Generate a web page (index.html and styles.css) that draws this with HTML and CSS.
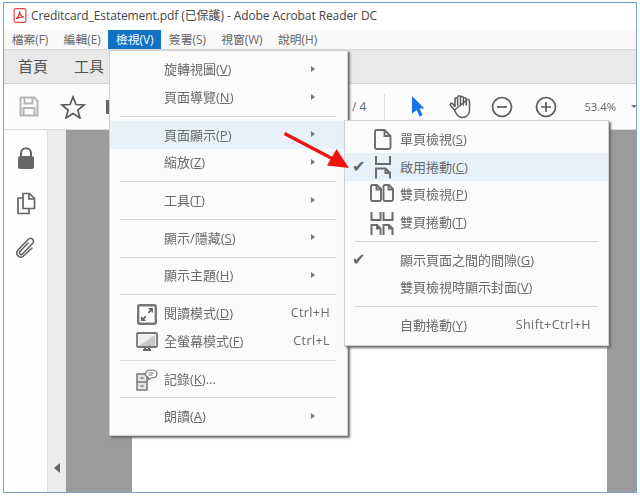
FILE: index.html
```html
<!DOCTYPE html>
<html lang="zh-Hant">
<head>
    <meta charset="UTF-8">
    <title>Creditcard_Estatement.pdf</title>
    <link rel="stylesheet" href="styles.css">
</head>
<body>
    <div class="window">
        <div class="titlebar">
            <svg class="pdf-icon" width="14" height="15" viewBox="0 0 14 16"><rect x="0.75" y="0.75" width="12.5" height="14.5" rx="1.5" fill="#fff" stroke="#e8474a" stroke-width="1.3"/><path d="M3 11.5C5 10 6.5 7 6.6 3.6C6.8 7 8.4 9 11 9.6C8.4 9.4 5.500 10 3 11.500Z" fill="none" stroke="#d9262a" stroke-width="1.2"/></svg>
            <span>Creditcard_Estatement.pdf (已保護) - Adobe Acrobat Reader DC</span>
        </div>
        <div class="menubar">
            <span class="menubar-item">檔案(F)</span>
            <span class="menubar-item">編輯(E)</span>
            <span class="menubar-item active">檢視(V)</span>
            <span class="menubar-item">簽署(S)</span>
            <span class="menubar-item">視窗(W)</span>
            <span class="menubar-item">說明(H)</span>
        </div>
        <div class="tabs">
            <span class="tab">首頁</span>
            <span class="tab">工具</span>
        </div>
        <div class="toolbar">
            <svg class="tool-save" width="20" height="21" viewBox="0 0 20 21" fill="none" stroke="#b4b4b4" stroke-width="2"><path d="M2 1.500H15L18.500 5V19.500H1.500V2Z"/><path d="M5.500 2V7.500H13.500V2M4.500 19V12H15.500V19"/></svg>
            <svg class="tool-star" width="26" height="24" viewBox="0 0 26 24" fill="none" stroke="#5a5a5a" stroke-width="1.700"><path d="M13 2L16 9.500L24 10L17.800 15L20 23L13 18.500L6 23L8.200 15L2 10L10 9.500Z"/></svg>
            <span class="tool-stub"></span>
            <span class="page-count">/ 4</span>
            <span class="tool-sep"></span>
            <svg class="tool-cursor" width="14" height="21" viewBox="0 0 14 21"><path d="M1 0L13.500 12.500H8.500L11.500 19L8.500 20.500L5.700 14L1 17.500Z" fill="#1473e6"/></svg>
            <svg class="tool-hand" width="23" height="25" viewBox="0 0 23 25" fill="none" stroke="#5a5a5a" stroke-width="1.500" stroke-linecap="round" stroke-linejoin="round"><path d="M5.500 16L1.500 11.500C0.500 10 2.500 8.500 4 10L6 12.500V5C6 3.200 8.600 3.200 8.600 5V11M8.600 3.500C8.600 1 11.500 1 11.500 3.500V11M11.500 3.500C11.500 1.800 14.400 1.800 14.400 3.800V11M14.400 5C14.400 3.300 17.300 3.300 17.300 5.500V11M17.300 6.500C17.300 5 20.500 5 20.500 7V16C20.500 20.500 17.500 23.500 13 23.500C9.500 23.500 7.500 21 5.500 16Z"/></svg>
            <svg class="tool-zoom-out" width="22" height="22" viewBox="0 0 22 22" fill="none" stroke="#5a5a5a" stroke-width="1.700"><circle cx="11" cy="11" r="9.500"/><path d="M6 11H16"/></svg>
            <svg class="tool-zoom-in" width="22" height="22" viewBox="0 0 22 22" fill="none" stroke="#5a5a5a" stroke-width="1.700"><circle cx="11" cy="11" r="9.500"/><path d="M6 11H16M11 6V16"/></svg>
            <span class="zoom-value">53.4%</span>
            <span class="zoom-caret"></span>
        </div>
        <div class="workspace">
            <div class="sidebar">
                <svg width="18" height="23" viewBox="0 0 18 23"><path d="M4 10V6.500C4 -0.500 14 -0.500 14 6.500V10" fill="none" stroke="#666" stroke-width="2"/><rect x="1" y="9" width="16" height="13" rx="2.500" fill="#666"/></svg>
                <svg width="20" height="23" viewBox="0 0 20 23" fill="none" stroke="#666" stroke-width="1.700"><path d="M7 1.500H13.500L18.500 6.500V16.500H7Z"/><path d="M13 1.500V7H18.500"/><path d="M7 6H2V21.500H13V16.500"/></svg>
                <svg width="21" height="22" viewBox="0 0 21 22" fill="none" stroke="#666" stroke-width="1.600" stroke-linecap="round"><path d="M13 6L5 14.500C3.500 16.500 6 18.500 7.500 17L17.500 6.500C20.500 3 16 -0.500 13 2.500L3 13C-0.500 17 4.500 22.500 8.500 19L17 11"/></svg>
            </div>
            <div class="strip"><span class="strip-arrow"></span></div>
            <div class="canvas"><div class="page"></div></div>
        </div>

        <div class="menu view-menu">
            <div class="row"><span class="row-label">旋轉視圖(<u>V</u>)</span><span class="sub"></span></div>
            <div class="row"><span class="row-label">頁面導覽(<u>N</u>)</span><span class="sub"></span></div>
            <div class="sep"></div>
            <div class="row hover"><span class="row-label">頁面顯示(<u>P</u>)</span><span class="sub"></span></div>
            <div class="row"><span class="row-label">縮放(<u>Z</u>)</span><span class="sub"></span></div>
            <div class="sep"></div>
            <div class="row"><span class="row-label">工具(<u>T</u>)</span><span class="sub"></span></div>
            <div class="sep"></div>
            <div class="row"><span class="row-label">顯示/隱藏(<u>S</u>)</span><span class="sub"></span></div>
            <div class="sep"></div>
            <div class="row"><span class="row-label">顯示主題(<u>H</u>)</span><span class="sub"></span></div>
            <div class="sep"></div>
            <div class="row">
                <svg class="row-icon" width="20" height="21" viewBox="0 0 20 21"><rect x="1.200" y="1.200" width="17.600" height="18.600" rx="1.500" fill="#fff" stroke="#777" stroke-width="2.400"/><path d="M11 4H16V9L14.300 7.300L12 9.500L10.700 8.200L13 6Z M4 12V17H9L7.300 15.300L9.500 13L8.200 11.700L6 14Z" fill="#666"/></svg>
                <span class="row-label">閱讀模式(<u>D</u>)</span><span class="shortcut">Ctrl+H</span>
            </div>
            <div class="row">
                <svg class="row-icon wide" width="22" height="20" viewBox="0 0 22 20"><rect x="1" y="1" width="20" height="14" rx="1" fill="#efefef" stroke="#777" stroke-width="1.800"/><path d="M3 14L19 3V14Z" fill="#c8c8c8"/><path d="M7 18H15M9 15.500V18M13 15.500V18" stroke="#666" stroke-width="2"/></svg>
                <span class="row-label">全螢幕模式(<u>F</u>)</span><span class="shortcut">Ctrl+L</span>
            </div>
            <div class="sep"></div>
            <div class="row">
                <svg class="row-icon wide" width="22" height="22" viewBox="0 0 22 22"><path d="M1 5H11V21H1Z" fill="#e4e4e4" stroke="#777" stroke-width="1.500"/><path d="M1 13H11M4.500 9H7.500M4.500 17H7.500" stroke="#777" stroke-width="1.300"/><path d="M15 1C18.500 1 21 2.500 21 5C21 7.500 18.500 9 15 9L12 11L12.500 8.500C10.500 8 9.500 6.500 9.500 5C9.500 2.500 12 1 15 1Z" fill="#fff" stroke="#777" stroke-width="1.200"/><path d="M12.500 4H18M12.500 6H16.500" stroke="#777"/></svg>
                <span class="row-label">記錄(<u>K</u>)...</span>
            </div>
            <div class="sep"></div>
            <div class="row"><span class="row-label">朗讀(<u>A</u>)</span><span class="sub"></span></div>
        </div>

        <div class="menu page-menu">
            <div class="row">
                <svg class="page-icon" width="18" height="21" viewBox="0 0 18 21" fill="none" stroke="#6c6c6c" stroke-width="1.900"><path d="M2.500 1H10.500L16.500 7V18.500C16.500 19.500 16 20 15 20H2.500C1.500 20 1 19.500 1 18.500V2.500C1 1.500 1.500 1 2.500 1Z"/><path d="M10.500 1V7H16.500"/></svg>
                <span class="row-label">單頁檢視(<u>S</u>)</span>
            </div>
            <div class="row hover">
                <span class="check">✔</span>
                <svg class="page-icon" width="18" height="23" viewBox="0 0 18 23" fill="none" stroke="#6c6c6c" stroke-width="2"><path d="M2 0V8H16V0M2 22.500V12.500H11.500L16 17V22.500M11.500 12.500V17H16"/></svg>
                <span class="row-label">啟用捲動(<u>C</u>)</span>
            </div>
            <div class="row">
                <svg class="page-icon wide" width="24" height="18" viewBox="0 0 24 18" fill="none" stroke="#6c6c6c" stroke-width="1.900"><path d="M2 1H7L11 5V15.500C11 16.500 10.500 17 9.500 17H2.500C1.500 17 1 16.500 1 15.500V2C1 1.500 1.500 1 2 1Z"/><path d="M15 1H19L23 5V15.500C23 16.500 22.500 17 21.500 17H15C14 17 13.500 16.500 13.500 15.500V2.500C13.500 1.500 14 1 15 1Z"/><path d="M6.500 1V5.500H11M18.500 1V5.500H23"/></svg>
                <span class="row-label">雙頁檢視(<u>P</u>)</span>
            </div>
            <div class="row">
                <svg class="page-icon wide" width="24" height="23" viewBox="0 0 24 23" fill="none" stroke="#6c6c6c" stroke-width="2"><path d="M1.500 0V8H10.500V0M13.500 0V8H22.500V0M1.500 23V13H7L10.500 16.500V23M13.500 23V13H19L22.500 16.500V23M7 13V16.500H10.500M19 13V16.500H22.500"/></svg>
                <span class="row-label">雙頁捲動(<u>T</u>)</span>
            </div>
            <div class="sep"></div>
            <div class="row"><span class="check">✔</span><span class="row-label">顯示頁面之間的間隙(<u>G</u>)</span></div>
            <div class="row"><span class="row-label">雙頁檢視時顯示封面(<u>V</u>)</span></div>
            <div class="sep"></div>
            <div class="row"><span class="row-label">自動捲動(<u>Y</u>)</span><span class="shortcut">Shift+Ctrl+H</span></div>
        </div>

        <svg class="red-arrow" width="70" height="40" viewBox="0 0 70 40"><path d="M1.500 1.500L50 27" stroke="#ee1111" stroke-width="3.200"/><path d="M66 36L44 33.500L53.500 17Z" fill="#ee1111"/></svg>
    </div>
</body>
</html>
```

FILE: styles.css
```css
html, body {
    margin: 0;
    padding: 0;
    background-color: #fff;
}

body {
    font-family: "Open Sans", "Noto Sans CJK TC", sans-serif;
    color: #5f5f5f;
}

.window {
    position: relative;
    box-sizing: border-box;
    width: 634px;
    height: 491px;
    margin: 2px 0 0 3px;
    border: 1px solid #7aa0d4;
    display: flex;
    flex-direction: column;
    overflow: hidden;
    filter: blur(0.35px);
}

.titlebar {
    height: 27px;
    flex: none;
    box-sizing: border-box;
    display: flex;
    align-items: center;
    padding: 0 0 3px 9px;
    gap: 4px;
    background-color: #fff;
    font-size: 12px;
    letter-spacing: -0.090px;
    color: #444;
}

.menubar {
    height: 19px;
    flex: none;
    display: flex;
    background-color: #f8f8f8;
    border-bottom: 1px solid #d8d8d8;
    font-size: 11.800px;
    line-height: 19px;
    color: #666;
}

.menubar-item {
    padding: 0 7.650px;
}

.menubar-item.active {
    background-color: #0f72c4;
    color: #fff;
}

.tabs {
    height: 33px;
    flex: none;
    display: flex;
    gap: 26px;
    padding-left: 14px;
    background-color: #e9e9e9;
    border-bottom: 1px solid #d0d0d0;
    font-size: 15px;
    line-height: 32px;
    color: #555;
}

.toolbar {
    height: 45px;
    flex: none;
    display: flex;
    align-items: center;
    background-color: #fcfcfc;
    border-bottom: 1px solid #dcdcdc;
}

.toolbar svg,
.toolbar span {
    flex: none;
}

.tool-save {
    margin-left: 15px;
}

.tool-star {
    margin-left: 21px;
}

.tool-stub {
    width: 4px;
    height: 14px;
    margin-left: 20px;
    background-color: #666;
}

.page-count {
    margin-left: 242px;
    font-size: 12px;
    white-space: nowrap;
    color: #666;
}

.tool-sep {
    width: 1px;
    height: 26px;
    margin-left: 18px;
    background-color: #ddd;
}

.tool-cursor {
    margin-left: 26px;
}

.tool-hand {
    margin-left: 24px;
}

.tool-zoom-out {
    margin-left: 19px;
}

.tool-zoom-in {
    margin-left: 22px;
}

.zoom-value {
    margin-left: 27px;
    font-size: 11.300px;
    color: #666;
}

.zoom-caret {
    margin-left: 15px;
    border: 3px solid transparent;
    border-top: 3px solid #777;
    margin-top: 3px;
}

.workspace {
    flex: 1;
    display: flex;
    min-height: 0;
}

.sidebar {
    width: 44px;
    flex: none;
    display: flex;
    flex-direction: column;
    align-items: center;
    gap: 22px;
    padding-top: 17px;
    box-sizing: border-box;
    background-color: #fefefe;
    border-right: 1px solid #dedede;
}

.strip {
    width: 18px;
    flex: none;
    display: flex;
    align-items: flex-end;
    justify-content: center;
    padding-bottom: 19px;
    box-sizing: border-box;
    background-color: #ececec;
}

.strip-arrow {
    border: 5px solid transparent;
    border-left: 0;
    border-right: 6px solid #666;
}

.canvas {
    flex: 1;
    padding: 40px 29px 0 66px;
    background-color: #9b9b9b;
    display: flex;
}

.page {
    flex: 1;
    background-color: #fff;
}

.menu {
    position: absolute;
    box-sizing: border-box;
    background-color: #fbfbfb;
    border: 1px solid #cfcfcf;
    box-shadow: 2px 2px 2px #6f6f6f;
    font-size: 13px;
    color: #6a6a6a;
}

.view-menu {
    left: 105px;
    top: 47px;
    width: 239px;
    height: 386px;
    padding: 5px 0;
}

.page-menu {
    left: 340px;
    top: 117px;
    width: 265px;
    height: 226px;
    padding: 4.500px 0;
}

.row {
    position: relative;
    box-sizing: border-box;
    height: 27.700px;
    display: flex;
    align-items: center;
    padding: 0 17px 2px 54px;
}

.page-menu .row {
    padding-left: 55px;
}

.row.hover {
    background-color: #e6f1fa;
}

.row-label {
    flex: 1;
    white-space: nowrap;
}

.sep {
    height: 1px;
    margin: 4.500px 11px 4.500px 10px;
    background-color: #d6d6d6;
}

.page-menu .sep {
    margin-left: 10px;
    margin-right: 10px;
}

.sub {
    width: 0;
    height: 0;
    margin-right: 15px;
    border: 3.500px solid transparent;
    border-right: 0;
    border-left: 4px solid #777;
}

.shortcut {
    font-size: 12.500px;
    letter-spacing: 0.400px;
}

.row-icon {
    position: absolute;
    left: 27px;
    top: 4px;
}

.row-icon.wide {
    left: 26px;
}

.page-icon {
    position: absolute;
    left: 29px;
    top: 3px;
}

.page-icon.wide {
    left: 25px;
}

.check {
    position: absolute;
    left: 7px;
    top: 4px;
    font-family: "DejaVu Sans", sans-serif;
    font-size: 16px;
    color: #666;
}

.red-arrow {
    position: absolute;
    left: 279px;
    top: 129px;
}
```
